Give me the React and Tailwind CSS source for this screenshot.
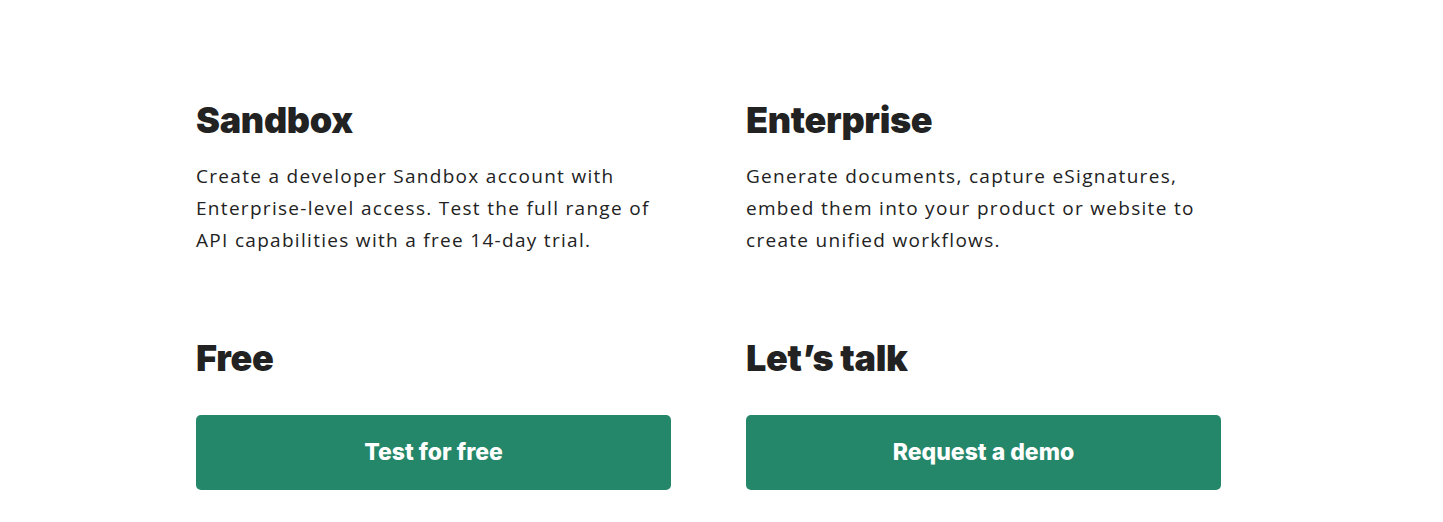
const plans = [
  {
    name: "Sandbox",
    text: "Create a developer Sandbox account with Enterprise-level access. Test the full range of API capabilities with a free 14-day trial.",
    price: "Free",
    cta: "Test for free",
  },
  {
    name: "Enterprise",
    text: "Generate documents, capture eSignatures, embed them into your product or website to create unified workflows.",
    price: "Let\u2019s talk",
    cta: "Request a demo",
  },
];

export default function App() {
  return (
    <div className="min-h-screen bg-white" style={{ fontFamily: "Inter, 'Liberation Sans', sans-serif" }}>
      <div className="pl-[196px] pt-[98px] grid grid-cols-[475px_475px] gap-x-[75px]">
        {plans.map((p) => (
          <div key={p.name} className="flex flex-col">
            <h2 className="text-[36px] leading-[44px] font-black text-[#222222] tracking-[-0.3px]">
              {p.name}
            </h2>
            <p
              className="mt-[18px] text-[19px] leading-[32px] text-[#222222] tracking-[1.3px] max-w-[468px]"
              style={{ fontFamily: "'Open Sans', sans-serif" }}
            >
              {p.text}
            </p>
            <h3 className="mt-[80px] text-[36px] leading-[44px] font-black text-[#222222] tracking-[-0.3px]">
              {p.price}
            </h3>
            <button className="mt-[35px] h-[75px] w-full rounded-[5px] bg-[#258769] text-white text-[23px] font-extrabold">
              {p.cta}
            </button>
          </div>
        ))}
      </div>
    </div>
  );
}
